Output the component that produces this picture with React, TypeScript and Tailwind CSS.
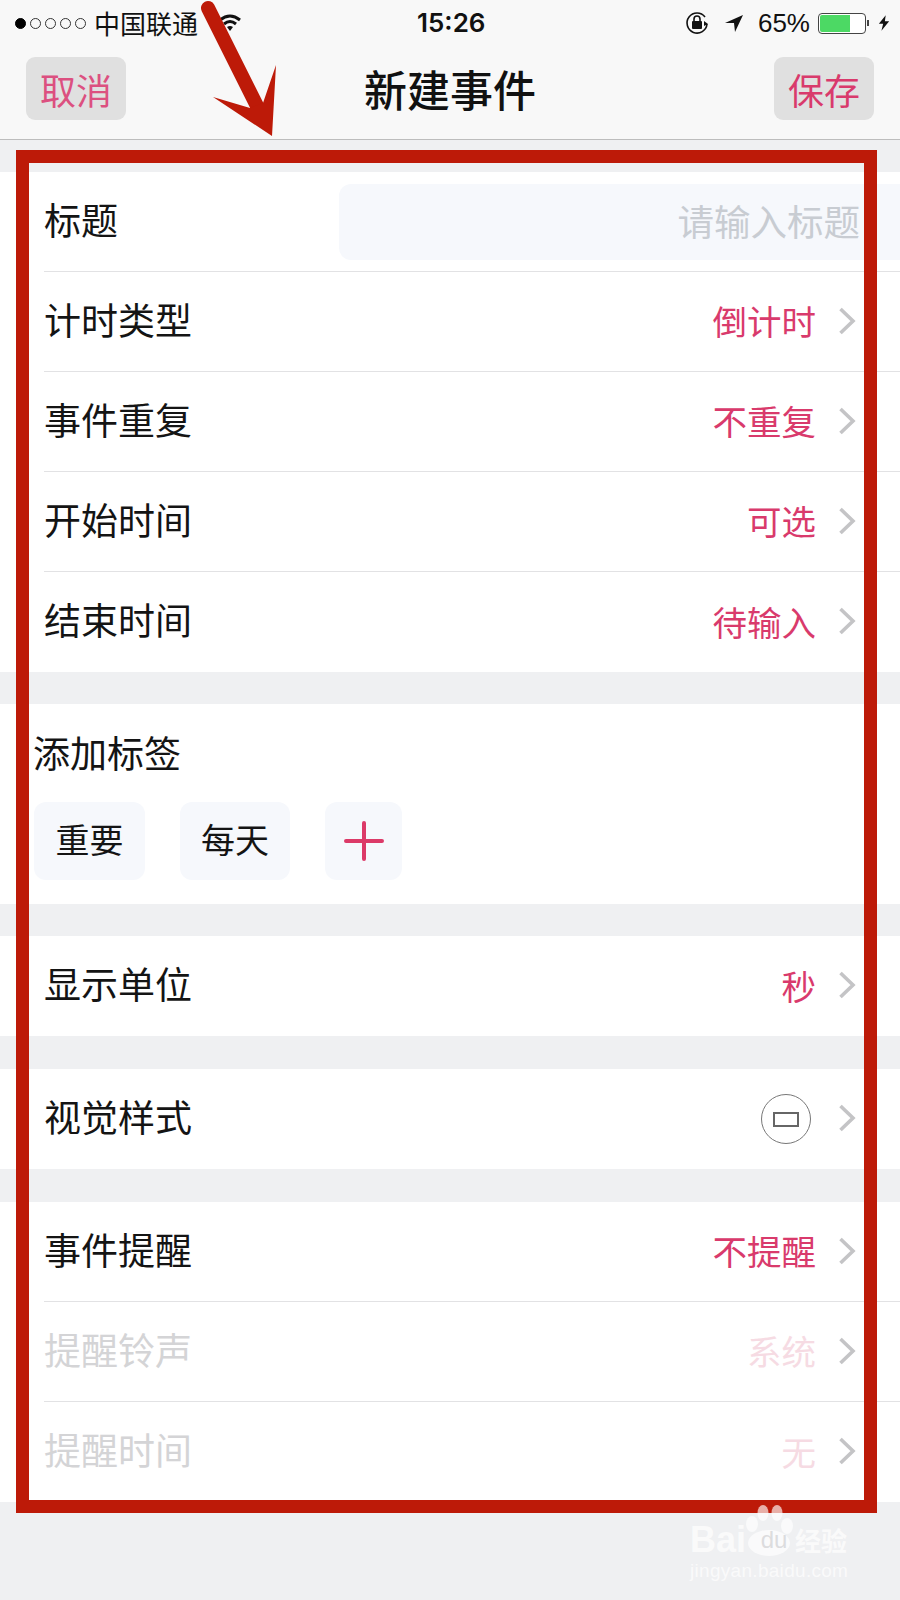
import React from "react";

const cjk = "font-['Noto_Sans_CJK_SC','Noto_Sans',sans-serif]";

const Chevron: React.FC = () => (
  <svg width="18" height="28" viewBox="0 0 18 28" fill="none" className="ml-[22px] shrink-0 mb-[2px]">
    <path d="M2.5 2 L15 14 L2.5 26" stroke="#c4c4c6" strokeWidth="3.6" />
  </svg>
);

type RowProps = {
  label: string;
  value?: string;
  dim?: boolean;
  last?: boolean;
  children?: React.ReactNode;
};

const Row: React.FC<RowProps> = ({ label, value, dim, last, children }) => (
  <div className="pl-[44px] h-[100px] bg-white">
    <div
      className={`h-full flex items-center pr-[44px] ${
        last ? "" : "border-b border-[#e2e2e4]"
      }`}
    >
      <span className={`text-[37px] leading-none mb-[5px] ${dim ? "text-[#d4d4d6]" : "text-[#141414]"}`}>
        {label}
      </span>
      <div className="ml-auto flex items-center">
        {value && (
          <span className={`text-[34.5px] leading-none mb-[2px] ${dim ? "text-[#f6dbe3]" : "text-[#d93a6c]"}`}>
            {value}
          </span>
        )}
        {children}
        <Chevron />
      </div>
    </div>
  </div>
);

const StatusBar: React.FC = () => (
  <div className="h-[46px] flex items-center pl-[15px] pr-[10px] text-[#111]">
    <div className="flex items-center gap-[4px]">
      <span className="w-[11px] h-[11px] rounded-full bg-black border border-black" />
      {[0, 1, 2, 3].map((i) => (
        <span key={i} className="w-[11px] h-[11px] rounded-full border border-[#333]" />
      ))}
    </div>
    <span className="ml-[8px] text-[26px] leading-none">中国联通</span>
    <svg width="24" height="18" viewBox="0 0 24 18" className="ml-[20px]">
      <path d="M2 6 Q12 -2 22 6 M6 10 Q12 5 18 10" stroke="#111" strokeWidth="3" fill="none" />
      <path d="M9 13 Q12 11 15 13 L12 17 Z" fill="#111" />
    </svg>
    <span className="absolute left-[417px] text-[26px] leading-none font-['Inter',sans-serif] font-semibold">
      15:26
    </span>
    <div className="ml-auto flex items-center">
      <svg width="26" height="26" viewBox="0 0 26 26" fill="none">
        <path d="M21 7 A10 10 0 1 0 23 14" stroke="#111" strokeWidth="1.6" />
        <path d="M24 14 L20 11 L20 16 Z" fill="#111" />
        <rect x="8" y="11" width="10" height="8" rx="1" fill="#111" />
        <path d="M10 11 V9 A3 3 0 0 1 16 9 V11" stroke="#111" strokeWidth="1.6" />
      </svg>
      <svg width="20" height="20" viewBox="0 0 20 20" className="ml-[14px]">
        <path d="M1 10 L19 2 L11 19 L10 10 Z" fill="#111" />
      </svg>
      <span className="ml-[14px] text-[26px] leading-none font-['Liberation_Sans',sans-serif]">65%</span>
      <div className="ml-[8px] w-[48px] h-[21px] rounded-[4px] border border-[#444] p-[1px] bg-white">
        <div className="h-full w-[30px] rounded-l-[2px] bg-[#4cd964]" />
      </div>
      <span className="w-[2px] h-[6px] bg-[#444] ml-[1px]" />
      <svg width="12" height="20" viewBox="0 0 14 20" className="ml-[9px]">
        <path d="M9 1 L1 11 H6 L4 19 L13 8 H8 Z" fill="#111" />
      </svg>
    </div>
  </div>
);

const NavBar: React.FC = () => (
  <div className="h-[94px] flex items-start justify-between pl-[26px] pr-[26px] pt-[11px] border-b border-[#bdbdbd]">
    <button className="w-[100px] h-[63px] rounded-[9px] bg-[#e0e0e0] text-[36px] leading-none text-[#dc5080]">
      取消
    </button>
    <span className="mt-[10px] text-[43px] leading-none font-medium text-[#111]">新建事件</span>
    <button className="w-[100px] h-[63px] rounded-[9px] bg-[#e0e0e0] text-[36px] leading-none text-[#d93a6c]">
      保存
    </button>
  </div>
);

const TagsSection: React.FC = () => (
  <div className="h-[200px] bg-white pl-[33px] pt-[30px]">
    <div className="text-[37px] leading-[36px] text-[#141414]">添加标签</div>
    <div className="mt-[32px] ml-[1px] flex gap-[35px]">
      <span className="w-[111px] h-[78px] pb-[6px] rounded-[12px] bg-[#f6f8fc] flex items-center justify-center text-[34px] text-[#141414]">
        重要
      </span>
      <span className="w-[110px] h-[78px] pb-[6px] rounded-[12px] bg-[#f6f8fc] flex items-center justify-center text-[34px] text-[#141414]">
        每天
      </span>
      <span className="w-[77px] h-[78px] rounded-[12px] bg-[#f6f8fc] flex items-center justify-center">
        <svg width="40" height="40" viewBox="0 0 40 40">
          <path d="M20 2 V38 M2 20 H38" stroke="#dc3a68" strokeWidth="4" strokeLinecap="round" />
        </svg>
      </span>
    </div>
  </div>
);

const Annotations: React.FC = () => (
  <>
    {/* red box */}
    <div className="absolute left-[16px] top-[150px] w-[861px] h-[1363px] border-[13px] border-[#bd1a08]" />
    {/* arrow */}
    <svg className="absolute left-0 top-0" width="300" height="150" viewBox="0 0 300 150">
      <path d="M208 8 L258 108" stroke="#bd1a08" strokeWidth="14" strokeLinecap="round" />
      <path d="M213 97 L250 108 L263 103 L276 65 L272 136 Z" fill="#bd1a08" />
    </svg>
    {/* watermark paw */}
    <svg className="absolute left-[740px] top-[1500px]" width="60" height="66" viewBox="0 0 60 66">
      <g fill="#fff" fillOpacity="0.65">
        <ellipse cx="23" cy="13" rx="5.5" ry="8" />
        <ellipse cx="37" cy="13" rx="5.5" ry="8" />
        <ellipse cx="12" cy="24" rx="6" ry="8" />
        <ellipse cx="47" cy="26" rx="6" ry="8" />
        <ellipse cx="29" cy="43" rx="21" ry="13" />
      </g>
    </svg>
    <div className="absolute left-[690px] top-[1524px] w-[165px] text-white/70">
      <div className="flex items-center h-[32px]">
        <span className="w-[62px] text-[36px] leading-none font-bold font-['Liberation_Sans',sans-serif]">Bai</span>
        <span className="w-[44px] text-center text-[24px] leading-none text-[#dcdcde] font-['Liberation_Sans',sans-serif]">
          du
        </span>
        <span className="ml-[-1px] text-[26px] leading-none font-bold">经验</span>
      </div>
      <div className="mt-[5px] text-[19px] leading-none tracking-[0.3px] font-['Liberation_Sans',sans-serif]">
        jingyan.baidu.com
      </div>
    </div>
  </>
);

export default function App() {
  return (
    <div className={`relative w-[900px] h-[1600px] overflow-hidden bg-[#eff0f2] ${cjk}`}>
      <div className="bg-[#f8f8f8]">
        <StatusBar />
        <NavBar />
      </div>
      <div className="h-[32px]" />

      <div className="pl-[44px] h-[100px] bg-white">
        <div className="h-full flex items-center border-b border-[#e2e2e4]">
          <span className="text-[37px] leading-none mb-[5px] text-[#141414]">标题</span>
          <div className="ml-auto w-[561px] h-[76px] rounded-l-[12px] bg-[#f6f8fc] flex items-center pr-[40px] justify-end text-[36.5px] leading-none text-[#c8ccd2]">
            请输入标题
          </div>
        </div>
      </div>
      <Row label="计时类型" value="倒计时" />
      <Row label="事件重复" value="不重复" />
      <Row label="开始时间" value="可选" />
      <Row label="结束时间" value="待输入" last />
      <div className="h-[32px]" />
      <TagsSection />
      <div className="h-[32px]" />
      <Row label="显示单位" value="秒" last />
      <div className="h-[33px]" />
      <Row label="视觉样式" last>
        <span className="w-[50px] h-[50px] mr-[5px] rounded-full border border-[#777] flex items-center justify-center">
          <span className="w-[26px] h-[15px] border-2 border-[#666]" />
        </span>
      </Row>
      <div className="h-[33px]" />
      <Row label="事件提醒" value="不提醒" />
      <Row label="提醒铃声" value="系统" dim />
      <Row label="提醒时间" value="无" dim last />

      <Annotations />
    </div>
  );
}
